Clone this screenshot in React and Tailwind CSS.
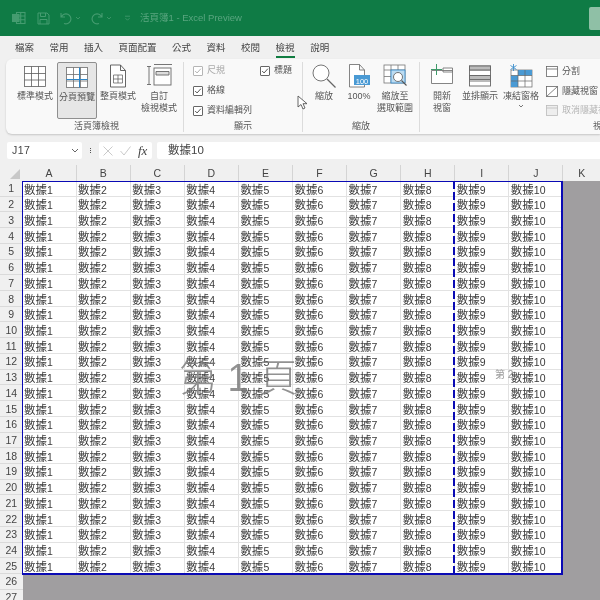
const FONT = "font-['Liberation_Sans','Noto_Sans_CJK_TC',sans-serif]";
const tabs = ["檔案", "常用", "插入", "頁面配置", "公式", "資料", "校閱", "檢視", "說明"];
const cols = ["A", "B", "C", "D", "E", "F", "G", "H", "I", "J"];
const rows = Array.from({ length: 25 }, (_, i) => i + 1);
const DIM = "#459c70";

function GridIcon({ accent }) {
  return (
    <svg width="24" height="24" viewBox="0 0 24 24" fill="none" stroke={accent ? "#6d6d6d" : "#5c5c5c"} strokeWidth="0.8">
      <rect x="1.5" y="2.5" width="21" height="20" fill="#fff" />
      <path d="M1.5 9.5h21M1.5 16h21M8.5 2.5v20M15.5 2.5v20" />
      {accent && <path d="M1.5 14.5h21M14.5 2.5v20" stroke="#2f86c6" strokeWidth="1" />}
    </svg>
  );
}
function PageIcon() {
  return (
    <svg width="24" height="26" viewBox="0 0 24 26" fill="none" stroke="#555" strokeWidth="0.9">
      <path d="M4.5 2h10l5 5.5V24h-15zM14.5 2v5.5h5" fill="#fff" />
      <path d="M7.5 12h9v8h-9zM7.5 16h9M12 12v8" strokeWidth="0.7" />
    </svg>
  );
}
function CustomIcon() {
  return (
    <svg width="26" height="26" viewBox="0 0 26 26" fill="none" stroke="#666" strokeWidth="0.9">
      <path d="M1 3.5h4M3 3.5v18M1 21.5h4M8 1.5h18" />
      <rect x="8" y="5" width="17" height="17" fill="#fff" />
      <path d="M10 8.5h13v3.5h-13z" fill="#ddd" />
    </svg>
  );
}
function ZoomIcon() {
  return (
    <svg width="26" height="26" viewBox="0 0 26 26" fill="none" stroke="#666" strokeWidth="0.9">
      <circle cx="10" cy="10" r="8" fill="#fff" />
      <path d="M16 16l8.5 8.5" strokeWidth="1.2" />
    </svg>
  );
}
function HundredIcon() {
  return (
    <svg width="24" height="26" viewBox="0 0 24 26" fill="none" stroke="#666" strokeWidth="0.8">
      <path d="M2.5 1.5h10l5 5.5v17h-15zM12.5 1.5V7h5" fill="#fff" />
      <rect x="7" y="12" width="16" height="10" fill="#4a9ad4" stroke="none" />
      <text x="15" y="20.5" fontSize="7.5" textAnchor="middle" fill="#fff" stroke="none" fontFamily="Liberation Sans">100</text>
    </svg>
  );
}
function ZoomSelIcon() {
  return (
    <svg width="24" height="26" viewBox="0 0 24 26" fill="none" stroke="#777" strokeWidth="0.8">
      <rect x="1" y="2" width="21" height="18" fill="#fff" />
      <path d="M1 7h21M1 13.5h21M8 2v18M15 2v18" />
      <rect x="8" y="7" width="14" height="13" fill="#bcdcf2" stroke="#2f86c6" />
      <circle cx="15" cy="14" r="4.5" fill="#fff" stroke="#555" />
      <path d="M18.5 17.5l5 5" stroke="#555" strokeWidth="1.1" />
    </svg>
  );
}
function NewWinIcon() {
  return (
    <svg width="24" height="26" viewBox="0 0 24 26" fill="none" stroke="#777" strokeWidth="0.9">
      <path d="M1.5 7.5h21v13h-21zM13 5h9.5v4h-9.5z" fill="#fff" />
      <path d="M6.5 1v11M1 6.5h11" stroke="#3f9b6a" strokeWidth="1" />
    </svg>
  );
}
function ArrangeIcon() {
  return (
    <svg width="24" height="24" viewBox="0 0 24 24" fill="none" stroke="#666" strokeWidth="0.9">
      <rect x="1.5" y="2" width="21" height="20" fill="#fff" />
      <path d="M1.5 6h21M1.5 11.5h21M1.5 17h21" />
      <rect x="1.5" y="2" width="21" height="4" fill="#bbb" />
      <rect x="1.5" y="11.5" width="21" height="4" fill="#bbb" />
    </svg>
  );
}
function FreezeIcon() {
  return (
    <svg width="24" height="26" viewBox="0 0 24 26" fill="none" stroke="#666" strokeWidth="0.7">
      <rect x="2" y="7" width="21" height="17" fill="#fff" />
      <rect x="9" y="7" width="14" height="5.5" fill="#4a9ad4" stroke="none" />
      <rect x="2" y="12.5" width="7" height="11.5" fill="#4a9ad4" stroke="none" />
      <path d="M2 12.5h21M2 18h21M9 7v17M16 7v17" />
      <path d="M4.5 1v7M1.5 2.5l6 4M7.5 2.5l-6 4" stroke="#3d8fcc" strokeWidth="0.9" />
    </svg>
  );
}
function Check({ on = true, dim }) {
  return (
    <span className={`flex h-[10px] w-[10px] items-center justify-center rounded-[1px] border bg-white ${dim ? "border-[#b5b5b5]" : "border-[#666]"}`}>
      {on && (
        <svg width="8" height="8" viewBox="0 0 7 7" fill="none" stroke={dim ? "#aaa" : "#444"} strokeWidth="0.8">
          <path d="M1 3.5l1.7 1.7L6 1.5" />
        </svg>
      )}
    </span>
  );
}
function RibbonBtn({ icon, label, w = "w-[40px]", selected, extra }) {
  return (
    <div className={`flex h-[57px] shrink-0 flex-col items-center rounded-[2px] pt-[1px] ${w} ${selected ? "border border-[#8f8f8f] bg-[#e6e6e6]" : ""}`}>
      <div className="flex h-[26px] items-center justify-center">{icon}</div>
      <div className="mt-[1px] text-center text-[9px] leading-[12px] whitespace-pre text-[#555]">{label}</div>
      {extra}
    </div>
  );
}
function Group({ w, label, children, last, labelClass = "text-center" }) {
  return (
    <div className={`relative flex h-[70px] flex-col ${w} shrink-0 ${last ? "" : "border-r border-[#dcdcdc]"}`}>
      <div className="h-[58px]">{children}</div>
      <div className={`text-[9px] leading-[12px] whitespace-nowrap text-[#555] ${labelClass}`}>{label}</div>
    </div>
  );
}
function CheckRow({ label, dim, className = "" }) {
  return (
    <div className={`flex items-center gap-[4px] text-[9px] leading-[11px] ${dim ? "text-[#aaa]" : "text-[#555]"} ${className}`}>
      <Check dim={dim} />
      <span>{label}</span>
    </div>
  );
}
function Cell({ n }) {
  return (
    <div className="h-[15.72px] w-[54.1px] shrink-0 overflow-hidden border-r border-b border-[#e2e2e2] bg-white pt-[1.5px] pl-[1.5px] text-[11.5px] leading-[14.5px] whitespace-nowrap text-[#3a3a3a]">
      數據<span className="text-[10.5px]">{n}</span>
    </div>
  );
}
function RowHead({ r }) {
  return (
    <div className="flex h-[15.72px] w-[22.5px] shrink-0 items-center justify-center border-b border-[#dadada] bg-[#f0f0f0] pt-[2px] text-[10.5px] text-[#444]">{r}</div>
  );
}

export default function App() {
  return (
    <div className={`relative flex h-[600px] w-[600px] flex-col overflow-hidden bg-[#f0f0f0] blur-[0.35px] ${FONT}`}>
      {/* title bar */}
      <div className="flex h-[36px] shrink-0 items-center bg-[#0f7b45] pl-[12px] text-[#5aa680]">
        <svg width="14" height="14" viewBox="0 0 14 14" fill="none" stroke={DIM} strokeWidth="1.1">
          <rect x="4.5" y="1.5" width="8.5" height="11" />
          <path d="M4.5 5h8.5M4.5 8.8h8.5M8.7 1.5v11" />
          <rect x="0.5" y="3.5" width="6.5" height="7" fill={DIM} />
        </svg>
        <svg className="ml-[11px]" width="13" height="13" viewBox="0 0 13 13" fill="none" stroke={DIM} strokeWidth="1">
          <path d="M1 1h9l2 2v9H1zM3.5 1v3.5h5V1M3 12V7.5h7V12" />
        </svg>
        <svg className="ml-[9px]" width="14" height="14" viewBox="0 0 14 14" fill="none" stroke={DIM} strokeWidth="1.1">
          <path d="M2 2v4h4M2.3 6A5 5 0 1 1 5 12.5" />
        </svg>
        <svg className="ml-[2px]" width="6" height="6" viewBox="0 0 6 6" fill="none" stroke={DIM} strokeWidth="0.8"><path d="M1 2l2 2 2-2" /></svg>
        <svg className="ml-[9px]" width="14" height="14" viewBox="0 0 14 14" fill="none" stroke={DIM} strokeWidth="1.1">
          <path d="M12 2v4H8M11.7 6A5 5 0 1 0 9 12.5" />
        </svg>
        <svg className="ml-[2px]" width="6" height="6" viewBox="0 0 6 6" fill="none" stroke={DIM} strokeWidth="0.8"><path d="M1 2l2 2 2-2" /></svg>
        <svg className="ml-[12px]" width="7" height="7" viewBox="0 0 7 7" fill="none" stroke={DIM} strokeWidth="0.8"><path d="M1 1.2h5M1.5 3.2l2 2 2-2" /></svg>
        <span className="ml-[9px] text-[9.5px] whitespace-nowrap">活頁簿1 - Excel Preview</span>
        <div className="mt-[1px] ml-auto h-[23px] w-[11px] rounded-l-[2px] bg-[#8fc0a6]" />
      </div>
      {/* tabs */}
      <div className="flex h-[23px] shrink-0 items-center gap-[15.5px] pt-[1px] pl-[15px] text-[9.5px] text-[#444]">
        {tabs.map((t) => (
          <div key={t} className="relative leading-[22px] whitespace-nowrap">
            {t}
            {t === "檢視" && <div className="absolute right-0 bottom-[1.5px] left-0 h-[1.5px] bg-[#107c41]" />}
          </div>
        ))}
      </div>
      {/* ribbon */}
      <div className="ml-[6px] flex h-[75px] shrink-0 items-start overflow-hidden rounded-l-[6px] bg-[#f9f9f9] pt-[3px] shadow-[0_1px_2px_rgba(0,0,0,0.18)]">
        <Group w="w-[178px]" label="活頁簿檢視" labelClass="text-center pl-[4px]">
          <div className="flex pl-[9px]">
            <RibbonBtn icon={<GridIcon />} label="標準模式" />
            <div className="ml-[2px]"><RibbonBtn icon={<GridIcon accent />} label="分頁預覽" selected /></div>
            <div className="ml-[1px]"><RibbonBtn icon={<PageIcon />} label="整頁模式" /></div>
            <div className="ml-[1px]"><RibbonBtn icon={<CustomIcon />} label={"自訂\n檢視模式"} /></div>
          </div>
        </Group>
        <Group w="w-[119px]" label="顯示">
          <div className="relative flex flex-col gap-[9px] pt-[3px] pl-[9px]">
            <CheckRow label="尺規" dim />
            <CheckRow label="格線" />
            <CheckRow label="資料編輯列" />
            <CheckRow label="標題" className="absolute top-[3px] left-[76px]" />
          </div>
        </Group>
        <Group w="w-[117px]" label="縮放">
          <div className="flex pl-[2px]">
            <RibbonBtn w="w-[38px]" icon={<ZoomIcon />} label="縮放" />
            <RibbonBtn w="w-[32px]" icon={<HundredIcon />} label="100%" />
            <RibbonBtn w="w-[40px]" icon={<ZoomSelIcon />} label={"縮放至\n選取範圍"} />
          </div>
        </Group>
        <Group w="w-[180px]" label="視窗" labelClass="pl-[173px]" last>
          <div className="flex pl-[3px]">
            <RibbonBtn w="w-[38px]" icon={<NewWinIcon />} label={"開新\n視窗"} />
            <RibbonBtn w="w-[38px]" icon={<ArrangeIcon />} label="並排顯示" />
            <RibbonBtn w="w-[44px]" icon={<FreezeIcon />} label="凍結窗格"
              extra={<svg className="mt-[2px]" width="6" height="5" viewBox="0 0 6 5" fill="none" stroke="#555" strokeWidth="0.8"><path d="M1 1l2 2 2-2" /></svg>} />
            <div className="flex shrink-0 flex-col gap-[8.5px] pt-[4px] pl-[3px] text-[9px] leading-[11px] whitespace-nowrap text-[#555]">
              <div className="flex items-center gap-[4px]">
                <svg width="12" height="11" viewBox="0 0 12 11" fill="#fff" stroke="#666" strokeWidth="0.8"><rect x="0.5" y="0.5" width="11" height="10" /><path d="M0.5 3h11" /></svg>分割
              </div>
              <div className="flex items-center gap-[4px]">
                <svg width="12" height="11" viewBox="0 0 12 11" fill="#fff" stroke="#666" strokeWidth="0.8"><rect x="0.5" y="0.5" width="11" height="10" /><path d="M0.5 10.5l11-10" /></svg>隱藏視窗
              </div>
              <div className="flex items-center gap-[4px] text-[#b5b5b5]">
                <svg width="12" height="11" viewBox="0 0 12 11" fill="#eee" stroke="#bbb" strokeWidth="0.8"><rect x="0.5" y="0.5" width="11" height="10" /><path d="M0.5 3h11" /></svg>取消隱藏視窗
              </div>
            </div>
          </div>
        </Group>
      </div>
      {/* formula bar */}
      <div className="flex h-[26px] shrink-0 items-center pt-[7px] pl-[7px] text-[#444]">
        <div className="flex h-[17px] w-[75px] items-center justify-between rounded-[2px] bg-white pr-[3px] pl-[5px] text-[10.5px] tracking-[0.5px]">
          <span>J17</span>
          <svg width="8" height="6" viewBox="0 0 8 6" fill="none" stroke="#555" strokeWidth="0.9"><path d="M1 1l3 3 3-3" /></svg>
        </div>
        <div className="flex w-[17px] flex-col items-center gap-[1px]">
          <i className="h-[1px] w-[1px] bg-[#555]" /><i className="h-[1px] w-[1px] bg-[#555]" /><i className="h-[1px] w-[1px] bg-[#555]" />
        </div>
        <div className="flex h-[17px] w-[53px] items-center gap-[7px] rounded-[2px] bg-white pl-[4px]">
          <svg width="10" height="10" viewBox="0 0 10 10" fill="none" stroke="#c4c4c4" strokeWidth="0.9"><path d="M0.5 0.5l9 9M9.5 0.5l-9 9" /></svg>
          <svg width="11" height="10" viewBox="0 0 11 10" fill="none" stroke="#c4c4c4" strokeWidth="0.9"><path d="M0.5 5l3.5 4 6.5-8.5" /></svg>
          <span className="font-['Liberation_Serif',serif] text-[13px] italic">fx</span>
        </div>
        <div className="ml-[5px] flex h-[17px] flex-1 items-center rounded-l-[2px] bg-white pl-[11px] text-[11.5px]">數據10</div>
      </div>
      {/* sheet */}
      <div className="relative flex-1 bg-[#a09ea0]">
        <div className="flex h-[21px] items-end bg-[#f0f0f0]">
          <div className="flex h-full w-[22.5px] shrink-0 items-end justify-end pr-[3px] pb-[2px]">
            <svg width="10" height="10" viewBox="0 0 10 10"><path d="M10 0v10H0z" fill="#c8c8c8" /></svg>
          </div>
          {cols.map((c) => (
            <div key={c} className="flex h-[16px] w-[54.1px] shrink-0 items-end justify-center border-r border-[#d4d4d4] pb-[2px] text-[10.5px] leading-[12px] text-[#444]">{c}</div>
          ))}
          <div className="flex h-[16px] flex-1 items-end justify-center pb-[2px] text-[10.5px] leading-[12px] text-[#444]">K</div>
        </div>
        {rows.map((r) => (
          <div key={r} className="flex">
            <RowHead r={r} />
            {cols.map((c, i) => <Cell key={c} n={i + 1} />)}
          </div>
        ))}
        {[26, 27].map((r) => <RowHead key={r} r={r} />)}
        {/* page break overlays */}
        <div className="pointer-events-none absolute top-[21px] left-[22px] h-[394px] w-[541px] border-t-[1.5px] border-r-2 border-b-2 border-l-[1.5px] border-[#0a0ab4]" />
        <div className="pointer-events-none absolute top-[21px] left-[452.5px] h-[393px] w-[2px] bg-[repeating-linear-gradient(to_bottom,#0a0ab4_0,#0a0ab4_8px,transparent_8px,transparent_11px)]" />
        <div className="pointer-events-none absolute top-[194px] left-[179px] text-[38px] leading-[48px] font-light whitespace-nowrap text-[#777]/80">第 1 頁</div>
        <div className="pointer-events-none absolute top-[209px] left-[495px] text-[10px] leading-[12px] whitespace-nowrap text-[#999]">第 2</div>
      </div>
      {/* mouse pointer */}
      <svg className="absolute top-[95px] left-[297px]" width="11" height="15" viewBox="0 0 11 15" fill="#fff" stroke="#555" strokeWidth="0.9">
        <path d="M1 1v11l3-2.5 2 4.5 2-1-2-4.3h4z" />
      </svg>
    </div>
  );
}
